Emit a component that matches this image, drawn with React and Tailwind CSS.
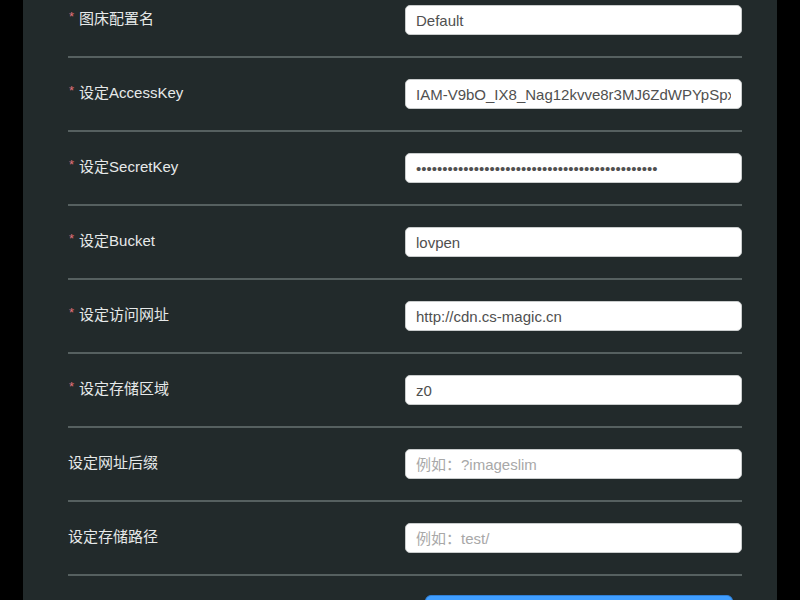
import React from "react";

const rows = [
  { label: "图床配置名", req: true, value: "Default" },
  { label: "设定AccessKey", req: true, value: "IAM-V9bO_IX8_Nag12kvve8r3MJ6ZdWPYpSpxyz" },
  { label: "设定SecretKey", req: true, value: "••••••••••••••••••••••••••••••••••••••••••••••" },
  { label: "设定Bucket", req: true, value: "lovpen" },
  { label: "设定访问网址", req: true, value: "http://cdn.cs-magic.cn" },
  { label: "设定存储区域", req: true, value: "z0" },
  { label: "设定网址后缀", req: false, placeholder: "例如：?imageslim" },
  { label: "设定存储路径", req: false, placeholder: "例如：test/" },
];

const font = { fontFamily: '"Liberation Sans", "Noto Sans CJK SC", sans-serif' };

export default function App() {
  return (
    <div className="w-[800px] h-[600px] bg-black overflow-hidden" style={font}>
      <div className="ml-[23px] w-[754px] h-[600px] bg-[#222a2b] pl-[45px] pr-[35px] overflow-hidden">
        <div className="-mt-[16px]">
          {rows.map((r, i) => (
            <div key={i}>
              <div className="grid grid-cols-2 items-center h-[72px]">
                <div className="flex items-start pb-[2px] text-[15px] leading-[20px] text-[#e6e9e9]">
                  {r.req && <span className="text-[#e0707a] text-[13px] leading-[16px] mr-[5px] ml-[1px]">*</span>}
                  <span>{r.label}</span>
                </div>
                <input
                  readOnly
                  value={r.value || ""}
                  placeholder={r.placeholder}
                  className="h-[30px] w-full rounded-[5px] border border-[#c9cccc] bg-white px-[10px] text-[15px] text-[#505050] placeholder:text-[#a8a8a8] outline-none"
                  style={font}
                />
              </div>
              <div className="h-[2px] bg-[#566060]" />
            </div>
          ))}
          <div className="grid grid-cols-2 pt-[19px]">
            <div />
            <div className="pl-[20px] pr-[9px]">
              <div className="h-[40px] rounded-[6px] bg-[#409eff] border border-[#2f7fd6]" />
            </div>
          </div>
        </div>
      </div>
    </div>
  );
}
